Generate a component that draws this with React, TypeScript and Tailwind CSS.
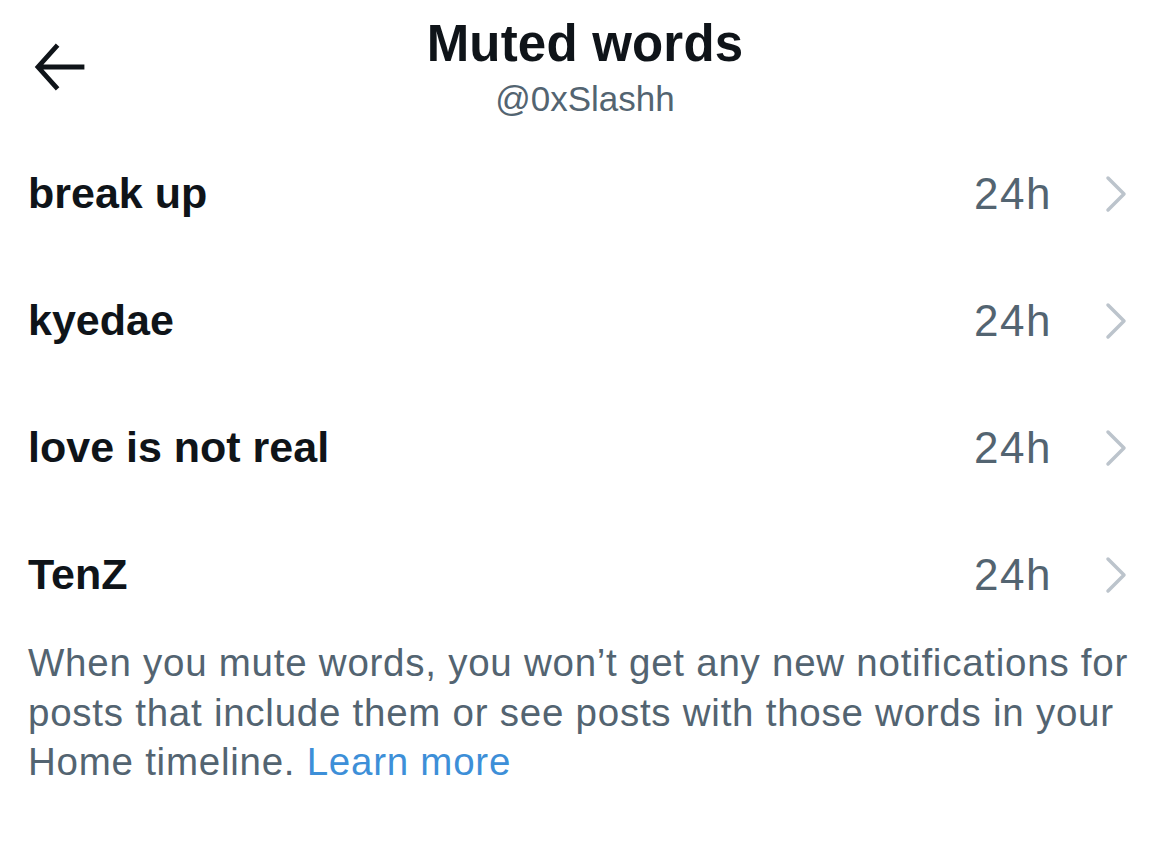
import React from "react";

const rows = ["break up", "kyedae", "love is not real", "TenZ"];

function Chevron() {
  return (
    <svg width="26" height="40" viewBox="0 0 26 40" fill="none">
      <path d="M4 4 L20 20 L4 36" stroke="#bcc4cc" strokeWidth="3.5" strokeLinecap="round" strokeLinejoin="round" />
    </svg>
  );
}

function BackArrow() {
  return (
    <svg width="52" height="48" viewBox="0 0 52 48" fill="none">
      <path d="M48 24 H6 M22 4 L4 24 L22 44" stroke="#0f1419" strokeWidth="4.8" strokeLinecap="square" strokeLinejoin="miter" />
    </svg>
  );
}

export default function App() {
  return (
    <div
      className="w-[1170px] h-[847px] bg-white overflow-hidden"
      style={{ fontFamily: '"Liberation Sans", Arial, sans-serif' }}
    >
      <div className="relative h-[130px] flex flex-col items-center pt-[14px]">
        <div className="absolute left-[34px] top-[43px]">
          <BackArrow />
        </div>
        <div className="text-[51px] leading-[60px] font-bold text-[#0f1419] tracking-[0.2px]">Muted words</div>
        <div className="text-[35px] leading-[44px] text-[#536471] mt-[3px]">@0xSlashh</div>
      </div>
      <div className="flex flex-col">
        {rows.map((r) => (
          <div key={r} className="h-[127px] flex items-center pl-[28px] pr-[40px]">
            <div className="flex-1 text-[43px] font-bold text-[#0f1419]">{r}</div>
            <div className="text-[44px] text-[#536471] tracking-[1.5px] mr-[52px]">24h</div>
            <Chevron />
          </div>
        ))}
      </div>
      <div className="px-[28px] text-[38.5px] leading-[49.5px] text-[#536471] tracking-[0.75px] whitespace-nowrap">
        <div>When you mute words, you won’t get any new notifications for</div>
        <div>posts that include them or see posts with those words in your</div>
        <div>
          Home timeline. <span className="text-[#3d8fd8]">Learn more</span>
        </div>
      </div>
    </div>
  );
}
